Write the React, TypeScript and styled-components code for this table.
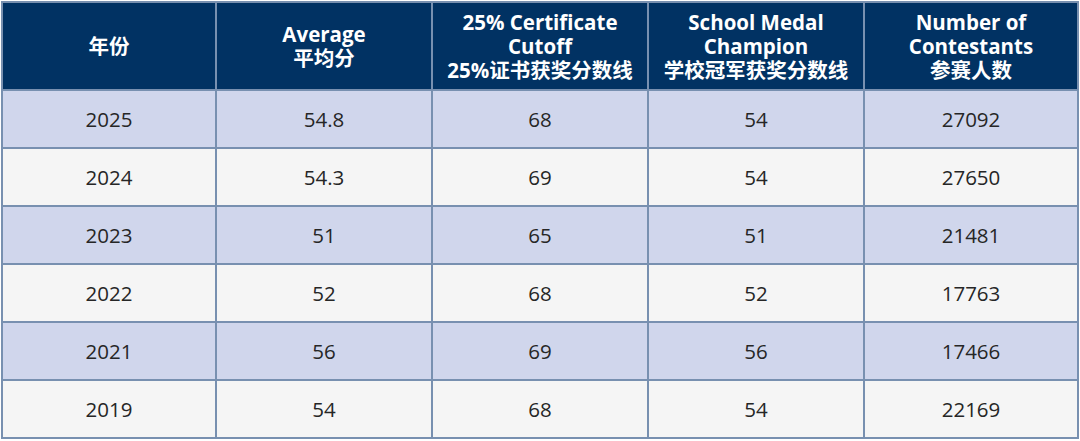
import React from "react";
import styled, { createGlobalStyle } from "styled-components";

const Global = createGlobalStyle`
  html, body { margin: 0; padding: 0; background: #ffffff; }
  body { font-family: "Open Sans", "Noto Sans CJK SC", sans-serif; }
`;

const Wrap = styled.div`
  padding: 1px 3px 2px 1px;
`;

const Table = styled.table`
  width: 1076px;
  border-collapse: collapse;
  table-layout: fixed;
`;

const Col = styled.col<{ $w: number }>`
  width: ${(p) => p.$w}px;
`;

const HeadCell = styled.th`
  background: #013263;
  color: #ffffff;
  font-family: "Open Sans", "Noto Sans CJK SC", sans-serif;
  font-weight: 700;
  font-size: 20.5px;
  line-height: 24px;
  height: 86px;
  padding: 0 2px;
  text-align: center;
  vertical-align: middle;
  border: 2px solid #7890b0;
`;

const HeadLine = styled.span`
  display: block;
  height: 24px;
`;

const Row = styled.tr<{ $alt: boolean }>`
  background: ${(p) => (p.$alt ? "#f5f5f5" : "#d0d6ec")};
`;

const Cell = styled.td`
  height: 56px;
  padding: 0;
  text-align: center;
  vertical-align: middle;
  color: #262626;
  font-family: "Open Sans", sans-serif;
  font-size: 20.5px;
  border: 2px solid #7890b0;
`;

const widths = [214, 216, 216, 216, 214];

const headers: string[][] = [
  ["年份"],
  ["Average", "平均分"],
  ["25% Certificate", "Cutoff", "25%证书获奖分数线"],
  ["School Medal", "Champion", "学校冠军获奖分数线"],
  ["Number of", "Contestants", "参赛人数"],
];

const rows: string[][] = [
  ["2025", "54.8", "68", "54", "27092"],
  ["2024", "54.3", "69", "54", "27650"],
  ["2023", "51", "65", "51", "21481"],
  ["2022", "52", "68", "52", "17763"],
  ["2021", "56", "69", "56", "17466"],
  ["2019", "54", "68", "54", "22169"],
];

export default function App() {
  return (
    <Wrap>
      <Global />
      <Table>
        <colgroup>
          {widths.map((w, i) => (
            <Col key={i} $w={w} />
          ))}
        </colgroup>
        <thead>
          <tr>
            {headers.map((lines, i) => (
              <HeadCell key={i}>
                {lines.map((l, j) => (
                  <HeadLine key={j}>{l}</HeadLine>
                ))}
              </HeadCell>
            ))}
          </tr>
        </thead>
        <tbody>
          {rows.map((r, i) => (
            <Row key={i} $alt={i % 2 === 1}>
              {r.map((c, j) => (
                <Cell key={j}>{c}</Cell>
              ))}
            </Row>
          ))}
        </tbody>
      </Table>
    </Wrap>
  );
}
